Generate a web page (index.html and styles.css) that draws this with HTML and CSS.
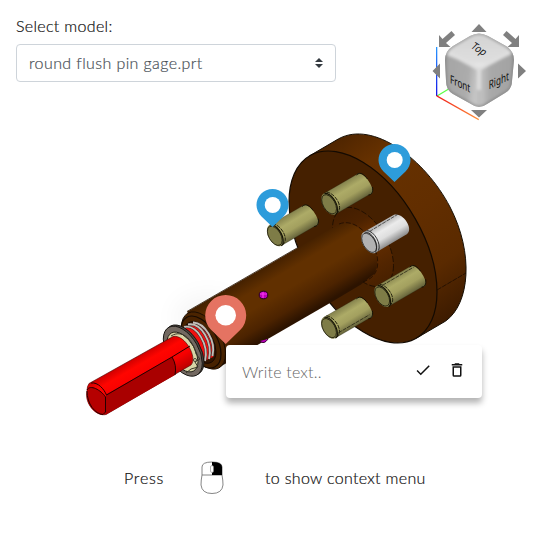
FILE: index.html
```html
<!DOCTYPE html>
<html lang="en">
<head>
<meta charset="utf-8">
<title>Model viewer</title>
<link rel="stylesheet" href="styles.css">
</head>
<body>
<main class="viewer">
<svg class="scene" viewBox="0 0 550 550" aria-hidden="true">
  <defs>
    <linearGradient id="rim" gradientUnits="userSpaceOnUse" x1="320" y1="140" x2="455" y2="325"><stop offset="0" stop-color="#492200"/><stop offset=".2" stop-color="#663100"/><stop offset=".5" stop-color="#622e00"/><stop offset=".75" stop-color="#5a2a00"/><stop offset="1" stop-color="#371800"/></linearGradient>
    <linearGradient id="shaft" gradientUnits="userSpaceOnUse" x1="263" y1="267" x2="295" y2="321"><stop offset="0" stop-color="#432000"/><stop offset=".25" stop-color="#613000"/><stop offset=".5" stop-color="#613000"/><stop offset=".8" stop-color="#4c2300"/><stop offset="1" stop-color="#2c1300"/></linearGradient>
    <linearGradient id="fillet" x1="0" y1="0" x2="1" y2="1"><stop offset="0" stop-color="#3a1a00"/><stop offset=".3" stop-color="#4c2200"/><stop offset=".45" stop-color="#6a3000"/><stop offset=".7" stop-color="#522500"/><stop offset="1" stop-color="#3c1b00"/></linearGradient>
    <linearGradient id="olive" gradientUnits="userSpaceOnUse" x1="11" y1="-19" x2="23" y2="1"><stop offset="0" stop-color="#898750"/><stop offset=".3" stop-color="#adab67"/><stop offset=".6" stop-color="#a3a05f"/><stop offset="1" stop-color="#626039"/></linearGradient>
    <linearGradient id="steel" gradientUnits="userSpaceOnUse" x1="11" y1="-19" x2="23" y2="1"><stop offset="0" stop-color="#b5b5b5"/><stop offset=".3" stop-color="#ebebeb"/><stop offset=".6" stop-color="#dedede"/><stop offset="1" stop-color="#858585"/></linearGradient>
    <linearGradient id="red" gradientUnits="userSpaceOnUse" x1="130" y1="360" x2="148" y2="391"><stop offset="0" stop-color="#ce0000"/><stop offset=".25" stop-color="#ff0500"/><stop offset=".6" stop-color="#f70000"/><stop offset="1" stop-color="#b80000"/></linearGradient>
    <linearGradient id="topFace" x1="0" y1="0" x2="0" y2="1"><stop offset="0" stop-color="#cfcfcf"/><stop offset=".8" stop-color="#dedede"/><stop offset="1" stop-color="#eee"/></linearGradient>
    <linearGradient id="frontFace" x1="0" y1="0" x2="1" y2=".2"><stop offset="0" stop-color="#858585"/><stop offset=".25" stop-color="#a5a5a5"/><stop offset=".8" stop-color="#acacac"/><stop offset="1" stop-color="#c4c4c4"/></linearGradient>
    <linearGradient id="rightFace" x1="0" y1="0" x2="1" y2="0"><stop offset="0" stop-color="#c4c4c4"/><stop offset=".25" stop-color="#a9a9a9"/><stop offset=".8" stop-color="#a3a3a3"/><stop offset="1" stop-color="#8c8c8c"/></linearGradient>
    <linearGradient id="axisX" x1="0" y1="0" x2="1" y2="0"><stop offset="0" stop-color="#f01818"/><stop offset="1" stop-color="#ff9238"/></linearGradient>
    <linearGradient id="axisZ" x1="0" y1="0" x2="0" y2="1"><stop offset="0" stop-color="#2998ff"/><stop offset="1" stop-color="#1414e8"/></linearGradient>
    <filter id="soft" x="-30%" y="-30%" width="160%" height="160%"><feGaussianBlur stdDeviation="1.6"/></filter>
    <filter id="haze" x="-80%" y="-80%" width="260%" height="260%"><feGaussianBlur stdDeviation="14"/></filter>
    <clipPath id="cubeClip"><path d="M470 36Q479 31 488 36L506 46Q514 51 514 60L512 81Q512 89 505 93L487 104Q479 110 471 104L453 94Q446 90 446 81L445 60Q445 51 453 46Z"/></clipPath>
    <g id="pinEdge" fill="none" stroke="#151306">
      <path d="M-6-10.2L28.4-30.2M6 10.2L40.4-9.8" stroke-opacity=".35" stroke-width=".7"/>
      <circle r="1" transform="matrix(7.4 4.5 0 8.5 -.4 .3)" vector-effect="non-scaling-stroke" stroke-width=".8"/>
      <path d="M-5-10.6C2-11 8-1 8 6C8 8 7 10 6 10.2" stroke-width="1.1"/>
      <path d="M-3-12C4-11 11-2 10 5L8 9" stroke-width=".9" stroke-dasharray="4 1"/>
      <path d="M27-29C31-33 35-29 38-25M43-17C44-12 42-9 39-9" stroke-width="1"/>
    </g>
  </defs>

  <ellipse cx="208" cy="318" rx="32" ry="20" fill="#000" opacity=".05" filter="url(#haze)"/>

  <g class="disc">
    <path d="M309.6 155.8L338.6 138.8C373 120 425 159 450 207C474 253 470 304 445.4 321.2L416.4 338.2Z" fill="url(#rim)" stroke="#171006" stroke-width="1"/>
    <circle r="1" transform="matrix(74 45 0 84.8 363 247)" fill="#452000" stroke="#130a02" stroke-width="1.2" vector-effect="non-scaling-stroke"/>
    <path d="M437 290L466 273" stroke="#1c0d00" stroke-width=".8" stroke-dasharray="5 1"/>
  </g>

  <g transform="translate(275.2 235.5)"><path d="M-6-10.2L28.4-30.2C36-33 49-9 40.4-9.8L6 10.2Z" fill="url(#olive)"/><circle r="1" transform="matrix(8.3 5 0 9.6 0 0)" fill="#7e7c47"/><use href="#pinEdge"/></g>

  <circle r="1" transform="matrix(30.5 18.6 0 35 363 247)" fill="url(#fillet)"/>
  <circle r="1" transform="matrix(30.5 18.6 0 35 363 247)" fill="none" stroke="#180b00" stroke-width=".8" stroke-dasharray="6 2" vector-effect="non-scaling-stroke"/>
  <path d="M187.1 311.8L339 224C361 216 386 255 374 274L361 284.5L330 303L218.9 367.5Z" fill="url(#shaft)"/>
  <path d="M339 224C359 216 380 246 377.5 266C376 275 371 279 363 282" fill="none" stroke="#1d0d00" stroke-width=".8" stroke-dasharray="5 2"/>
  <path d="M187 311.5L297 248" stroke="#241100" stroke-width=".8"/>

  <g transform="translate(329.5 204)"><path d="M-6-10.2L28.4-30.2C36-33 49-9 40.4-9.8L6 10.2Z" fill="url(#olive)"/><circle r="1" transform="matrix(8.3 5 0 9.6 0 0)" fill="#7e7c47"/><use href="#pinEdge"/></g>
  <g transform="translate(369.5 242.5)"><path d="M-6-10.2L24-27.5C34-31 46-11 36-7.5L6 10.2Z" fill="url(#steel)"/><circle r="1" transform="matrix(8.3 5 0 9.6 0 0)" fill="#b2b2b2"/><circle r="1" transform="matrix(7.4 4.5 0 8.5 -.4 .3)" fill="none" stroke="#222" stroke-width=".8" vector-effect="non-scaling-stroke"/><path d="M-5-10.5C3-11 10 2 6 10M-3-12C5-12 12 2 9 8" fill="none" stroke="#222" stroke-width=".9"/><path d="M0-11L28-28" stroke="#333" stroke-width=".8" stroke-dasharray="4 1"/></g>
  <g transform="translate(382.6 296.2)"><path d="M-6-10.2L28.4-30.2C36-33 49-9 40.4-9.8L6 10.2Z" fill="url(#olive)"/><circle r="1" transform="matrix(8.3 5 0 9.6 0 0)" fill="#7e7c47"/><use href="#pinEdge"/><path d="M0-11L31-29" stroke="#242313" stroke-width=".8" stroke-dasharray="4 1"/></g>
  <g transform="translate(329.4 327.8)"><path d="M-6-10.2L28.4-30.2C36-33 49-9 40.4-9.8L6 10.2Z" fill="url(#olive)"/><circle r="1" transform="matrix(8.3 5 0 9.6 0 0)" fill="#7e7c47"/><use href="#pinEdge"/><path d="M9 5L40-13" stroke="#242313" stroke-width=".8" stroke-dasharray="4 1"/></g>

  <g class="sleeve">
    <circle r="1" transform="matrix(22 13.4 0 25.3 203.5 340.5)" fill="#4b2400" stroke="#1a0c00" stroke-width="1" vector-effect="non-scaling-stroke"/>
    <circle r="1" transform="matrix(20 12 0 23 201 342)" fill="#482200" stroke="#160a00" stroke-width="1.2" vector-effect="non-scaling-stroke"/>
    <circle r="1" transform="matrix(16 9.5 0 18.5 200 342.5)" fill="#321400" stroke="#140800" stroke-width="1" vector-effect="non-scaling-stroke"/>
    <path d="M184 328L193 323C206 325 217 348 213 357L202 362Z" fill="#f01010"/>
    <g fill="none">
      <path d="M184 327C197 324 209 345 205 361M188 324.5C201 322 213 342 209 359M193 322.5C205 323 216 341 212.5 356" stroke="#39302c" stroke-width="2.8"/>
      <path d="M184 327C197 324 209 345 205 361M188 324.5C201 322 213 342 209 359M193 322.5C205 323 216 341 212.5 356" stroke="#c4bdb7" stroke-width="1.8"/>
    </g>
  </g>
  <g class="collar">
    <circle r="1" transform="matrix(19.5 12 0 22 184.5 350)" fill="#4a453f" stroke="#181511" stroke-width="1" vector-effect="non-scaling-stroke"/>
    <circle r="1" transform="matrix(19.5 12 0 22 182.8 351.2)" fill="#736961" stroke="#191613" stroke-width="1" vector-effect="non-scaling-stroke"/>
    <circle r="1" transform="matrix(15.5 9.5 0 17.5 182.5 352)" fill="#d8d5a7" stroke="#24221a" stroke-width="1" vector-effect="non-scaling-stroke"/>
    <path d="M171 336C184 328 194 343 196 354L200 359L195 362L198 367L191 369L186 373" fill="none" stroke="#39362a" stroke-width="1"/>
    <circle cx="195" cy="360" r="1.5" fill="#e2dfb4" stroke="#24221a" stroke-width=".8"/>
  </g>

  <g class="rod">
    <path d="M89 383.5L173 336.5C185 334 198 358 191 365L106 414.5C96 417 84 403 87 391Q87 386 89 383.5Z" fill="url(#red)" stroke="#4b0000" stroke-width=".6"/>
    <path d="M106 394.5L172 357Q177 365 175 375L106 414.5Z" fill="#a90000"/>
    <path d="M87 389C91 384 101 390 105.5 397V413C101 417 92 412 88 402Z" fill="#b50000"/>
    <path d="M87 390C90 384 101 390 105.5 397V412L103 414.5C95 414 87 404 87 391M91 383C98 382 104 389 106.5 395L172 357L190 346M172 357Q177 365 175 375" fill="none" stroke="#240000" stroke-width="1"/>
  </g>

  <g class="screws">
    <ellipse cx="263.5" cy="295" rx="4.3" ry="3.8" fill="#b900b9" stroke="#260022"/>
    <path d="M260 294H267M263 292V298" stroke="#f537ef" stroke-width="1.2"/>
    <path d="M260 341Q264 345 268 339" fill="#b900b9" stroke="#3b0038"/>
  </g>

  <g class="orientation">
    <path d="M437 96L482 69" stroke="#5aff44" stroke-width="1.3"/>
    <rect x="436" y="47" width="1.3" height="49" fill="url(#axisZ)"/>
    <path d="M436.5 95L479 119L478.5 120.3L436.5 96.5Z" fill="url(#axisX)"/>
    <g clip-path="url(#cubeClip)">
      <path d="M438 22H520V115H438Z" fill="#b9b9b9"/>
      <g filter="url(#soft)">
        <path d="M440 53L479 25L519 53L479 70Z" fill="url(#topFace)"/>
        <path d="M440 53Q460 59 478 69V115L438 92Z" fill="url(#frontFace)"/>
        <path d="M480 69Q500 58 519 51V91L480 115Z" fill="url(#rightFace)"/>
        <path d="M446 51L479 69L514 50" fill="none" stroke="#e0e0e0" stroke-width="3.5"/>
        <path d="M479 67V90" stroke="#dcdcdc" stroke-width="4"/>
        <path d="M470 36Q479 31 488 36L506 46Q514 51 514 60L512 81Q512 89 505 93L487 104Q479 110 471 104L453 94Q446 90 446 81L445 60Q445 51 453 46Z" fill="none" stroke="#777" stroke-width="1.6"/>
      </g>
    </g>
    <g class="cube-text">
      <text transform="matrix(.62 .4 -.6 .62 470 47.5)">Top</text>
      <text transform="matrix(.65 .31 0 .95 450 83)">Front</text>
      <text transform="matrix(.65 -.31 0 .95 488.8 89.5)">Right</text>
    </g>
    <g fill="#808080">
      <path d="M479 24L486.5 32H471.5ZM471 110H487L479 117.5ZM432.5 71L440 63.5V78.5ZM526 71L518 63.5V78.5Z"/>
      <path id="turn" d="M451.5 31L455 35L446 43L450.5 47H439V35L442.5 39Z"/>
      <use href="#turn" transform="matrix(-1 0 0 1 958 0)"/>
    </g>
  </g>

  <g class="markers">
    <path d="M394.5 182L383.5 171.5A16 16 0 1 1 405.5 171.5Z" fill="#2d9cdb"/><circle cx="394.7" cy="160" r="8" fill="#fff"/>
    <path d="M272.5 227L261.5 216.5A16 16 0 1 1 283.5 216.5Z" fill="#2d9cdb"/><circle cx="272.7" cy="205" r="8" fill="#fff"/>
    <path d="M225.7 344L211 329.8A20.5 20.5 0 1 1 240.4 329.8Z" fill="#e57362"/><circle cx="225.7" cy="315.2" r="10.3" fill="#fff"/>
  </g>
</svg>

<section class="picker">
  <div class="label">Select model:</div>
  <div class="select"><span>round flush pin gage.prt</span>
    <svg width="8" height="10" viewBox="0 0 8 10"><path d="M0 4L4 0L8 4ZM0 6H8L4 10Z" fill="#343a40"/></svg>
  </div>
</section>

<div class="note">
  <span class="placeholder">Write text..</span>
  <svg class="check" width="18" height="18" viewBox="0 0 24 24"><path d="M9 16.2L4.8 12L3.4 13.4L9 19L21 7L19.6 5.6Z"/></svg>
  <svg class="trash" width="18" height="18" viewBox="0 0 24 24"><path fill-rule="evenodd" d="M15.5 4L14.5 3H9.5L8.5 4H5V6H19V4ZM6 7V19Q6 21 8 21H16Q18 21 18 19V7ZM8 9H16V19H8Z"/></svg>
</div>

<footer class="hint">
  <span class="press">Press</span>
  <svg width="24" height="34" viewBox="0 0 24 34"><path d="M2 14V6Q2 1 12 1Q22 1 22 6V14Q23 19 23 24Q22 32.5 12 32.5Q2 32.5 1 24Q1 19 2 14H22" fill="#fff" stroke="#666" stroke-width=".8"/><path d="M12 1Q22 1 22 6V14H12Z"/><rect x="10.5" y="4.5" width="3" height="7" rx="1.5" fill="#fff" stroke="#888" stroke-width=".6"/></svg>
  <span class="action">to show context menu</span>
</footer>
</main>
</body>
</html>
```

FILE: styles.css
```css
* { box-sizing: border-box; }
body { margin: 0; background: #fff; color: #111; font: 300 16px/24px Lato, sans-serif; -webkit-text-stroke: .2px currentColor; }
.viewer { position: relative; width: 550px; height: 550px; overflow: hidden; }
.scene { position: absolute; inset: 0; width: 550px; height: 550px; }
.cube-text { font: 400 12.5px "Noto Sans", sans-serif; fill: #111; -webkit-text-stroke: 0; }
.picker { position: relative; padding: 14px 16px 0; width: 352px; }
.label { letter-spacing: .32px; }
.select { display: flex; align-items: center; justify-content: space-between; height: 38px; margin-top: 6px; padding: 0 12px; border: 1px solid #ced4da; border-radius: 4px; background: #fff; color: #495057; letter-spacing: .4px; }
.note { position: absolute; left: 226px; top: 345px; width: 256px; height: 53px; display: flex; align-items: center; padding: 0 16px; border-radius: 4px; background: #fff; box-shadow: 0 5px 6px rgba(0, 0, 0, .3); }
.placeholder { flex: 1; color: #666; padding-top: 1px; letter-spacing: .2px; -webkit-text-stroke: 0; }
.note svg { fill: #111; margin-bottom: 4px; }
.trash { margin-left: 16px; }
.hint { position: absolute; left: 124px; top: 461px; display: flex; align-items: center; }
.press { width: 76px; letter-spacing: .8px; }
.action { margin-left: 41px; letter-spacing: .32px; white-space: nowrap; }
```
